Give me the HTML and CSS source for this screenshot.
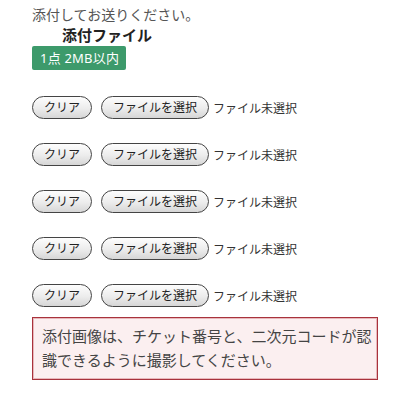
FILE: index.html
```html
<!DOCTYPE html>
<html lang="ja">
<head>
  <meta charset="UTF-8">
  <meta name="viewport" content="width=400, initial-scale=1.0">
  <title>添付ファイル</title>
  <link rel="stylesheet" href="styles.css">
</head>
<body>
  <div class="page">
    <p class="lead">添付してお送りください。</p>
    <h2 class="attach-title">添付ファイル</h2>
    <span class="limit-badge">1点 2MB以内</span>

    <div class="file-list">
      <div class="file-row">
        <button type="button" class="pill-btn clear-btn">クリア</button>
        <button type="button" class="pill-btn pick-btn">ファイルを選択</button>
        <span class="file-status">ファイル未選択</span>
      </div>
      <div class="file-row">
        <button type="button" class="pill-btn clear-btn">クリア</button>
        <button type="button" class="pill-btn pick-btn">ファイルを選択</button>
        <span class="file-status">ファイル未選択</span>
      </div>
      <div class="file-row">
        <button type="button" class="pill-btn clear-btn">クリア</button>
        <button type="button" class="pill-btn pick-btn">ファイルを選択</button>
        <span class="file-status">ファイル未選択</span>
      </div>
      <div class="file-row">
        <button type="button" class="pill-btn clear-btn">クリア</button>
        <button type="button" class="pill-btn pick-btn">ファイルを選択</button>
        <span class="file-status">ファイル未選択</span>
      </div>
      <div class="file-row">
        <button type="button" class="pill-btn clear-btn">クリア</button>
        <button type="button" class="pill-btn pick-btn">ファイルを選択</button>
        <span class="file-status">ファイル未選択</span>
      </div>
    </div>

    <div class="notice">添付画像は、チケット番号と、二次元コードが認識できるように撮影してください。</div>
  </div>
</body>
</html>
```

FILE: styles.css
```css
body {
  margin: 0;
  padding: 0;
  background: #fff;
  color: #333;
  font-family: "Noto Sans", "Noto Sans CJK JP", sans-serif;
}
.page {
  padding: 5px 22px 0 32px;
}
.lead {
  margin: 0;
  font-size: 14px;
  line-height: 20px;
  color: #555;
}
.attach-title {
  margin: 0 0 0 30px;
  font-size: 15px;
  line-height: 20px;
  font-weight: bold;
  color: #222;
}
.limit-badge {
  display: inline-block;
  margin-top: 1px;
  padding: 0 7px 0 8px;
  height: 24px;
  line-height: 24px;
  background: #3d9a6b;
  color: #fff;
  font-size: 13px;
  letter-spacing: 0.2px;
  border-radius: 2px;
}
.file-list {
  margin-top: 26px;
  display: flex;
  flex-direction: column;
  gap: 24px;
}
.file-row {
  display: flex;
  align-items: center;
  height: 23px;
}
.pill-btn {
  height: 23px;
  padding: 0;
  border: 1px solid #444;
  border-radius: 12px;
  background: linear-gradient(#fdfdfd 0%, #ececec 55%, #d6d6d6 100%);
  color: #222;
  font-family: inherit;
  font-size: 12px;
  line-height: 21px;
  box-sizing: border-box;
}
.clear-btn {
  width: 60px;
  margin-right: 9px;
}
.pick-btn {
  width: 108px;
  margin-right: 4px;
}
.file-status {
  font-size: 12px;
  color: #333;
}
.notice {
  margin-top: 10px;
  padding: 6px 4px 7px 9px;
  border: 1px solid #a8323c;
  box-shadow: inset 0 0 0 1px #e8b8bc;
  background: #fbeff0;
  color: #444;
  font-size: 15px;
  line-height: 24px;
}
```
